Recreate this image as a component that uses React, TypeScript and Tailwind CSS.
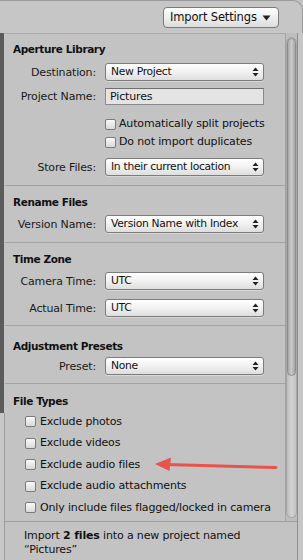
import React from 'react';

const font = { fontFamily: '"DejaVu Sans", "Liberation Sans", sans-serif' };

function UpDown() {
  return (
    <svg width="7" height="10" viewBox="0 0 7 10" className="shrink-0">
      <path d="M3.5 0.5 L6.5 4 L0.5 4 Z" fill="#222" />
      <path d="M3.5 9.5 L6.5 6 L0.5 6 Z" fill="#222" />
    </svg>
  );
}

function Select({ value }: { value: string }) {
  return (
    <div className="flex h-[18px] w-[159px] items-center justify-between rounded-[3px] border border-[#7c7c7c] bg-gradient-to-b from-[#ffffff] via-[#f1f1f1] to-[#dedede] pl-[5px] pr-[4px] shadow-[0_1px_0_rgba(255,255,255,0.35)]">
      <span className="whitespace-nowrap text-[10.75px] leading-none tracking-[-0.3px] text-[#111]">{value}</span>
      <UpDown />
    </div>
  );
}

function Box() {
  return (
    <span className="inline-block h-[11px] w-[11px] shrink-0 rounded-[2px] border border-[#7b7b7b] bg-gradient-to-b from-[#fafafa] to-[#d9d9d9]" />
  );
}

function Row({ label, children }: { label: string; children: React.ReactNode }) {
  return (
    <div className="flex items-center">
      <span className="w-[92px] pr-[1px] text-right text-[11px] leading-none tracking-[-0.15px] text-[#1a1a1a]">{label}</span>
      <div className="ml-[8px]">{children}</div>
    </div>
  );
}

function Heading({ children }: { children: React.ReactNode }) {
  return (
    <div className="pl-[8px] text-[10.5px] font-bold leading-[14px] tracking-[-0.4px] text-[#111]">{children}</div>
  );
}

export default function App() {
  const fileTypes = [
    'Exclude photos',
    'Exclude videos',
    'Exclude audio files',
    'Exclude audio attachments',
    'Only include files flagged/locked in camera',
  ];

  return (
    <div className="relative flex h-[560px] w-[303px] flex-col overflow-hidden bg-[#c3c3c3]" style={font}>
      {/* top bar */}
      <div className="flex h-[33px] shrink-0 justify-end rounded-tr-[10px] border-r border-t border-[#9a9a9a] bg-[#c6c6c6] pr-[23px] pt-[6px]">
        <div className="flex h-[21px] w-[116px] items-center justify-between rounded-[4px] border border-[#7a7a7a] bg-gradient-to-b from-[#ffffff] via-[#efefef] to-[#dcdcdc] pl-[6px] pr-[7px]">
          <span className="text-[11.5px] leading-none tracking-[-0.15px] text-[#111]">Import Settings</span>
          <svg width="9" height="6" viewBox="0 0 9 6">
            <path d="M0.5 0.5 L8.5 0.5 L4.5 5.5 Z" fill="#222" />
          </svg>
        </div>
      </div>

      <div className="flex flex-1">
        {/* left edge */}
        <div className="flex w-[5px] shrink-0 flex-col">
          <div className="h-[380px] w-[4px] bg-[#5b5b5b]" />
          <div className="flex-1 border-r border-[#9d9d9d] bg-[#c7c7c7]" />
        </div>

        <div className="flex w-[292px] flex-col">
          <div className="flex h-[488px]">
            {/* panel content */}
            <div className="w-[280px] border-t border-[#a9a9a9] tracking-[-0.15px]">
              <div className="border-b border-[#a2a2a2] pb-[9px] pt-[8px]">
                <Heading>Aperture Library</Heading>
                <div className="mt-[7px]">
                  <Row label="Destination:">
                    <Select value="New Project" />
                  </Row>
                </div>
                <div className="mt-[7px]">
                  <Row label="Project Name:">
                    <div className="flex h-[17px] w-[159px] items-center border border-[#8a8a8a] border-t-[#6f6f6f] bg-[#e4e4e4] pl-[4px] text-[11px] leading-none text-[#111]">
                      Pictures
                    </div>
                  </Row>
                </div>
                <div className="mt-[10px] pl-[100px]">
                  <div className="flex h-[18px] items-center gap-[3px] text-[11px] text-[#111]">
                    <Box />
                    Automatically split projects
                  </div>
                  <div className="flex h-[18px] items-center gap-[3px] text-[11px] text-[#111]">
                    <Box />
                    Do not import duplicates
                  </div>
                </div>
                <div className="mt-[7px]">
                  <Row label="Store Files:">
                    <Select value="In their current location" />
                  </Row>
                </div>
              </div>

              <div className="border-b border-[#a2a2a2] pb-[9px] pt-[9px]">
                <Heading>Rename Files</Heading>
                <div className="mt-[6px]">
                  <Row label="Version Name:">
                    <Select value="Version Name with Index" />
                  </Row>
                </div>
              </div>

              <div className="border-b border-[#a2a2a2] pb-[8px] pt-[9px]">
                <Heading>Time Zone</Heading>
                <div className="mt-[6px]">
                  <Row label="Camera Time:">
                    <Select value="UTC" />
                  </Row>
                </div>
                <div className="mt-[9px]">
                  <Row label="Actual Time:">
                    <Select value="UTC" />
                  </Row>
                </div>
              </div>

              <div className="border-b border-[#a2a2a2] pb-[8px] pt-[13px]">
                <Heading>Adjustment Presets</Heading>
                <div className="mt-[4px]">
                  <Row label="Preset:">
                    <Select value="None" />
                  </Row>
                </div>
              </div>

              <div className="pt-[10px]">
                <Heading>File Types</Heading>
                <div className="mt-[3px] pl-[20px]">
                  {fileTypes.map((t) => (
                    <div key={t} className="flex h-[21.5px] items-center gap-[4px] text-[11px] text-[#111]">
                      <Box />
                      {t}
                    </div>
                  ))}
                </div>
              </div>
            </div>

            {/* scrollbar */}
            <div className="relative w-[12px] border-l border-[#a3a3a3] bg-[#bdbdbd] pt-[4px]">
              <div className="flex h-[481px] flex-col rounded-full border border-[#a6a6a6] bg-gradient-to-r from-[#bcbcbc] via-[#d2d2d2] to-[#c2c2c2]">
                <div className="h-[338px] rounded-full border border-[#8c8c8c] bg-gradient-to-r from-[#a9a9a9] via-[#c9c9c9] to-[#a5a5a5]" />
              </div>
            </div>
          </div>

          {/* footer */}
          <div className="flex-1 border-t border-[#9f9f9f] bg-[#c3c3c3] pl-[19px] pt-[7px] text-[11px] leading-[14px] tracking-[-0.15px] text-[#111]">
            <div>
              Import <b>2 files</b> into a new project named
            </div>
            <div>“Pictures”</div>
          </div>
        </div>

        {/* right edge */}
        <div className="w-[6px] shrink-0 border-l border-[#8e8e8e] bg-[#c6c6c6]" />
      </div>

      {/* annotation arrow */}
      <svg className="pointer-events-none absolute left-0 top-0" width="303" height="560">
        <line x1="166" y1="464.5" x2="276" y2="467.5" stroke="#e8534b" strokeWidth="3" strokeLinecap="round" />
        <path d="M155 464 L171 457.5 L169.5 471 Z" fill="#e8534b" />
      </svg>
    </div>
  );
}
